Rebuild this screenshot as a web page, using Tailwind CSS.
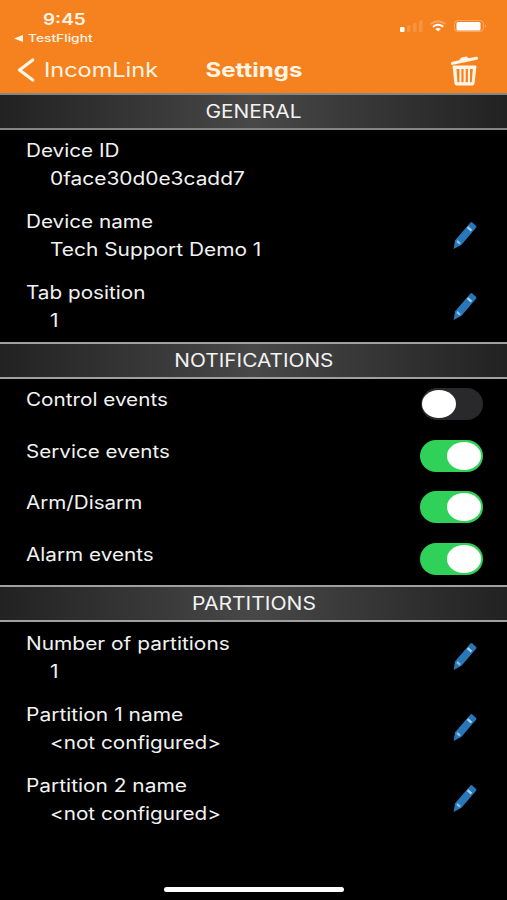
<!DOCTYPE html>
<html lang="en">
<head>
<meta charset="utf-8">
<title>Settings</title>
<script src="https://cdn.jsdelivr.net/npm/@tailwindcss/browser@4"></script>
</head>
<body class="bg-black">
<svg class="hidden">
  <symbol id="pencil" viewBox="0 0 24 28">
    <path d="M17.300 .7q1-1 2-.3l3.600 3.300q.9 1 .1 2L8.500 22.700 .6 27.100 2.100 18.300z" fill="#2878b9"/>
    <path d="M15.300 4.200l3.900 3.500-1.500 1.800-3.900-3.500z" fill="#a9cfee"/>
    <path d="M4.700 18l3.200 2.900-1.600 1.600-2.900-2.600z" fill="#8fc0e8"/>
  </symbol>
</svg>
<div class="flex h-[900px] w-[507px] flex-col overflow-hidden bg-black font-['Inter','Liberation_Sans',sans-serif] text-[18px] text-[#f2f2f2]">
  <header class="h-[93px] shrink-0 bg-[#f6821f] text-[#fff5e6]">
    <div class="flex h-[46px] justify-between pr-[20px] pl-[14px]">
      <div class="flex flex-col pt-[10px]">
        <div class="h-[19px] w-max origin-left translate-x-[29px] scale-x-[1.22] text-[15.5px] leading-[19px] font-semibold">9:45</div>
        <div class="flex h-[18px] items-center">
          <svg class="mr-[5px] h-[7px] w-[9px]" viewBox="0 0 9 7"><path d="M0 3.5L9 0v7z" fill="#fff5e6"/></svg>
          <span class="w-max origin-left scale-x-[1.25] text-[11px] leading-[18px] font-medium">TestFlight</span>
        </div>
      </div>
      <svg class="mt-[18px] h-[16px] w-[88px]" viewBox="0 0 88 16">
        <rect x="1" y="9" width="4.500" height="5" rx="1" fill="#fff"/>
        <g fill="#fff" opacity=".14"><rect x="8" y="7" width="3.500" height="7" rx="1"/><rect x="14" y="5" width="3.500" height="9" rx="1"/><rect x="20" y="2.500" width="3.500" height="11.500" rx="1"/></g>
        <g fill="none" stroke="#fff"><path d="M31.500 6q7.500-5.500 15 0" stroke-width="1.800" opacity=".28"/><path d="M34 8.700q5-3.800 10.300 0" stroke-width="2"/></g>
        <path d="M36.300 11q2.800-1.800 5.600 0L39.100 13.600z" fill="#fff"/>
        <rect x="55.500" y="2.500" width="29" height="11" rx="3.500" fill="none" stroke="#fff" opacity=".3"/>
        <rect x="57.500" y="4" width="24" height="8.500" rx="1.500" fill="#fff"/>
        <path d="M86 6q2 2 0 4z" fill="#fff" opacity=".35"/>
      </svg>
    </div>
    <div class="relative flex h-[47px] items-center pl-[17px]">
      <svg class="h-[24px] w-[18px]" viewBox="0 0 18 24"><path d="M15.700 2L2.500 12l13.200 10" fill="none" stroke="#fff5e6" stroke-width="3.200" stroke-linecap="round" stroke-linejoin="round"/></svg>
      <span class="ml-[9px] w-max origin-left scale-x-[1.175] text-[20px]">IncomLink</span>
      <h1 class="absolute left-1/2 -translate-x-1/2 scale-x-[1.2] text-[20px] font-bold">Settings</h1>
      <svg class="absolute top-[9px] left-[450px] h-[32px] w-[29px]" viewBox="0 0 29 32">
        <path d="M2.500 8.300L26.500 3.300" stroke="#fff5e6" stroke-width="3.200" stroke-linecap="round"/>
        <path d="M9.500 5.500l1.500-2.300 5.500-1.200 2 1.600z" fill="#fff5e6" stroke="#fff5e6" stroke-linejoin="round"/>
        <path d="M3.500 10.500h22q1 0 .9 1.200l-1.800 16.300q-.3 2.600-3 2.600H7.400q-2.700 0-3-2.600l-1.800-16.300Q2.500 10.500 3.500 10.500z" fill="#fff5e6"/>
        <path d="M6.500 14h2.900v13.200h-2zM11.400 14h2.200v13.200h-2.200zM15.700 14h2.200v13.200h-2.200zM20 14h2.800l-1 13.200H20z" fill="#f6821f"/>
      </svg>
    </div>
  </header>

  <h2 class="flex h-[37px] shrink-0 items-center justify-center border-y-2 border-[#858585] bg-linear-to-r from-[#222] via-[#484848] to-[#222]"><span class="scale-x-[1.16]">GENERAL</span></h2>
  <section class="flex h-[212px] shrink-0 flex-col pt-[7px] pr-[30px] pl-[26px] leading-[28px]">
    <div class="h-[71px] shrink-0"><div class="w-max origin-left scale-x-[1.15]">Device ID</div><div class="ml-[24px] w-max origin-left scale-x-[1.16]">0face30d0e3cadd7</div></div>
    <div class="flex h-[71px] shrink-0 justify-between"><div><div class="w-max origin-left scale-x-[1.15]">Device name</div><div class="ml-[24px] w-max origin-left scale-x-[1.16]">Tech Support Demo 1</div></div><svg class="mt-[14px] h-[28px] w-[24px]"><use href="#pencil"/></svg></div>
    <div class="flex h-[70px] shrink-0 justify-between"><div><div class="w-max origin-left scale-x-[1.15]">Tab position</div><div class="ml-[24px] w-max origin-left scale-x-[1.16]">1</div></div><svg class="mt-[14px] h-[28px] w-[24px]"><use href="#pencil"/></svg></div>
  </section>

  <h2 class="flex h-[37px] shrink-0 items-center justify-center border-y-2 border-[#a0a0a0] bg-linear-to-r from-[#222] via-[#484848] to-[#222]"><span class="scale-x-[1.155]">NOTIFICATIONS</span></h2>
  <section class="flex h-[206px] shrink-0 flex-col pt-[7px] pr-[24px] pl-[26px] leading-[28px]">
    <div class="flex h-[51.700px] shrink-0 justify-between"><div class="w-max origin-left scale-x-[1.15]">Control events</div><div class="mt-[2px] flex h-[32px] w-[62px] items-center rounded-full bg-[#29292b] pl-[1px]"><div class="h-[28px] w-[34px] rounded-[50%] bg-white"></div></div></div>
    <div class="flex h-[51.700px] shrink-0 justify-between"><div class="w-max origin-left scale-x-[1.145]">Service events</div><div class="mt-[2px] flex h-[32px] w-[63px] items-center justify-end rounded-full bg-[#30d158] pr-[2px]"><div class="h-[28px] w-[34px] rounded-[50%] bg-white"></div></div></div>
    <div class="flex h-[51.700px] shrink-0 justify-between"><div class="w-max origin-left scale-x-[1.145]">Arm/Disarm</div><div class="mt-[2px] flex h-[32px] w-[63px] items-center justify-end rounded-full bg-[#30d158] pr-[2px]"><div class="h-[28px] w-[34px] rounded-[50%] bg-white"></div></div></div>
    <div class="flex h-[50px] shrink-0 justify-between"><div class="w-max origin-left scale-x-[1.15]">Alarm events</div><div class="mt-[2px] flex h-[32px] w-[63px] items-center justify-end rounded-full bg-[#30d158] pr-[2px]"><div class="h-[28px] w-[34px] rounded-[50%] bg-white"></div></div></div>
  </section>

  <h2 class="flex h-[37px] shrink-0 items-center justify-center border-y-2 border-[#a0a0a0] bg-linear-to-r from-[#222] via-[#484848] to-[#222]"><span class="scale-x-[1.17]">PARTITIONS</span></h2>
  <section class="flex h-[265px] shrink-0 flex-col pt-[8px] pr-[30px] pl-[26px] leading-[28px]">
    <div class="flex h-[71px] shrink-0 justify-between"><div><div class="w-max origin-left scale-x-[1.16]">Number of partitions</div><div class="ml-[24px] w-max origin-left scale-x-[1.16]">1</div></div><svg class="mt-[13px] h-[28px] w-[24px]"><use href="#pencil"/></svg></div>
    <div class="flex h-[70.500px] shrink-0 justify-between"><div><div class="w-max origin-left scale-x-[1.165]">Partition 1 name</div><div class="ml-[24px] w-max origin-left scale-x-[1.15]">&lt;not configured&gt;</div></div><svg class="mt-[13px] h-[28px] w-[24px]"><use href="#pencil"/></svg></div>
    <div class="flex h-[70.500px] shrink-0 justify-between"><div><div class="w-max origin-left scale-x-[1.16]">Partition 2 name</div><div class="ml-[24px] w-max origin-left scale-x-[1.15]">&lt;not configured&gt;</div></div><svg class="mt-[13px] h-[28px] w-[24px]"><use href="#pencil"/></svg></div>
  </section>
  <div class="ml-[164px] h-[5px] w-[180px] shrink-0 rounded-full bg-white"></div>
</div>
</body>
</html>
